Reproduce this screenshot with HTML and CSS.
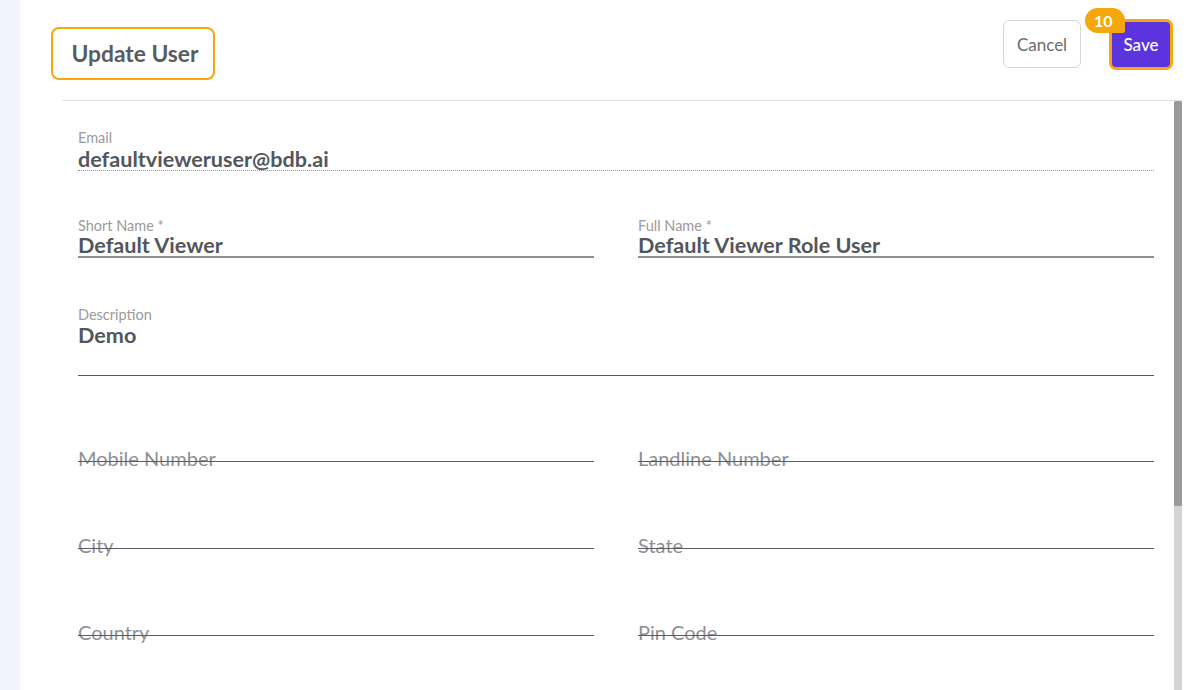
FILE: index.html
```html
<!DOCTYPE html>
<html lang="en">
<head>
<meta charset="utf-8">
<title>Update User</title>
<link rel="stylesheet" href="styles.css">
</head>
<body>
<div class="app">
  <aside class="rail"></aside>
  <main class="main">
    <header class="header">
      <div class="title-box"><h1 class="title">Update User</h1></div>
      <div class="actions">
        <button class="btn btn-cancel">Cancel</button>
        <div class="save-wrap">
          <span class="badge">10</span>
          <button class="btn btn-save">Save</button>
        </div>
      </div>
    </header>
    <section class="panel">
      <div class="form">
        <div class="field field-email">
          <div class="label">Email</div>
          <div class="value">defaultvieweruser@bdb.ai</div>
        </div>
        <div class="row row-names">
          <div class="field field-line">
            <div class="label">Short Name *</div>
            <div class="value">Default Viewer</div>
          </div>
          <div class="field field-line">
            <div class="label">Full Name *</div>
            <div class="value">Default Viewer Role User</div>
          </div>
        </div>
        <div class="field field-desc">
          <div class="label">Description</div>
          <div class="value">Demo</div>
        </div>
        <div class="row row-empty first">
          <div class="empty"><span class="placeholder">Mobile Number</span></div>
          <div class="empty"><span class="placeholder">Landline Number</span></div>
        </div>
        <div class="row row-empty">
          <div class="empty"><span class="placeholder">City</span></div>
          <div class="empty"><span class="placeholder">State</span></div>
        </div>
        <div class="row row-empty">
          <div class="empty"><span class="placeholder">Country</span></div>
          <div class="empty"><span class="placeholder">Pin Code</span></div>
        </div>
      </div>
      <div class="scrollbar"><div class="thumb"></div></div>
    </section>
  </main>
</div>
</body>
</html>
```

FILE: styles.css
```css
* { box-sizing: border-box; }
html, body { margin: 0; padding: 0; height: 100%; background: #ffffff; }
body {
  font-family: Lato, "Open Sans", "Liberation Sans", sans-serif;
  color: #53575c;
  overflow: hidden;
}
.app { display: flex; height: 690px; }
.rail { width: 20px; flex: none; background: #f2f3fc; }
.main {
  flex: 1;
  display: flex;
  flex-direction: column;
  padding: 0 21px 0 31px;
  min-width: 0;
}
.header {
  height: 100px;
  flex: none;
  display: flex;
  justify-content: space-between;
  align-items: flex-start;
  padding: 19px 9px 0 0;
}
.title-box {
  margin-top: 8px;
  width: 164px;
  height: 53px;
  border: 2px solid #f5a70d;
  border-radius: 8px;
  display: flex;
  align-items: center;
  justify-content: center;
  padding-left: 4px;
}
.title {
  margin: 0;
  font-size: 22.8px;
  font-weight: 700;
  color: #585c61;
  line-height: 1;
}
.actions { display: flex; align-items: flex-start; gap: 28px; }
.btn {
  font-family: Lato, "Open Sans", "Liberation Sans", sans-serif;
  font-size: 17px;
  cursor: pointer;
  padding: 0;
}
.btn-cancel {
  margin-top: 1px;
  width: 78px;
  height: 48px;
  background: #ffffff;
  border: 1px solid #d6d6d6;
  border-radius: 6px;
  color: #6a6d71;
}
.save-wrap { position: relative; }
.btn-save {
  width: 64px;
  height: 51px;
  background: #5b34e0;
  border: 3px solid #f5a70d;
  border-radius: 7px;
  color: #ffffff;
  font-weight: 500;
}
.badge {
  position: absolute;
  left: -24px;
  top: -11px;
  width: 40px;
  height: 25px;
  background: #f5a70d;
  color: #ffffff;
  border-radius: 13px 13px 2px 13px;
  font-size: 16px;
  font-weight: 700;
  line-height: 25px;
  padding-left: 9px;
}
.panel {
  flex: 1;
  display: flex;
  margin-left: 11px;
  border-top: 1px solid #e2e2e2;
  min-height: 0;
}
.form {
  flex: 1;
  padding: 0 20px 0 16px;
}
.scrollbar {
  width: 8px;
  flex: none;
  background: #d4d4d4;
  display: flex;
  flex-direction: column;
}
.thumb {
  height: 405px;
  background: #9a9a9a;
  border-radius: 2px 2px 0 0;
}
.label {
  font-size: 14.5px;
  line-height: 16px;
  color: #9a9a9a;
}
.value {
  font-size: 21.6px;
  line-height: 22px;
  font-weight: 700;
  color: #53575c;
}
.field-email { margin-top: 29px; border-bottom: 1px dotted #9a9a9a; }
.field-email .value { margin-top: 2px; }
.row {
  display: grid;
  grid-template-columns: 1fr 1fr;
  column-gap: 44px;
}
.row-names { margin-top: 48px; }
.field-line { border-bottom: 2px solid #8e8e8e; }
.field-line .label { line-height: 14px; }
.field-line .value { line-height: 22px; margin-top: 1px; }
.field-desc { margin-top: 49px; border-bottom: 1px solid #555a5e; }
.field-desc .value { margin-top: 1px; padding-bottom: 29px; }
.empty { position: relative; height: 87px; }
.row-empty.first .empty { height: 86px; }
.empty::after {
  content: "";
  position: absolute;
  left: 0;
  right: 0;
  bottom: 0;
  height: 1px;
  background: #5a5d61;
}
.placeholder {
  position: absolute;
  left: 0;
  bottom: -6px;
  font-size: 20px;
  line-height: 20px;
  color: #8e9094;
}
```
